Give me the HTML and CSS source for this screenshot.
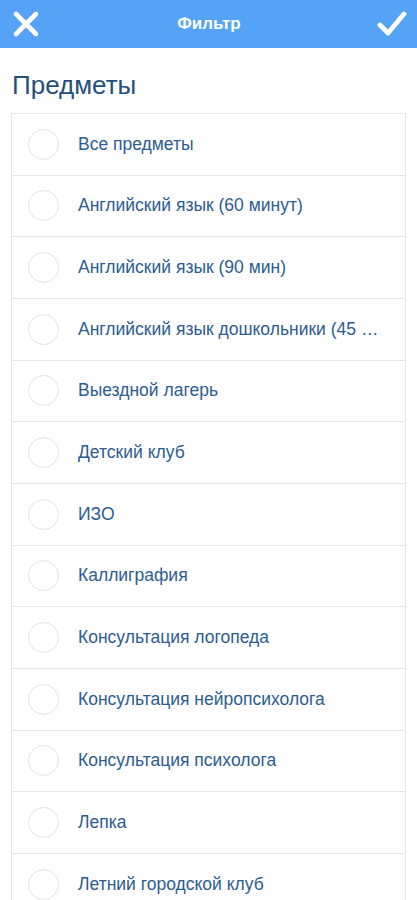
FILE: index.html
```html
<!DOCTYPE html>
<html lang="ru">
<head>
<meta charset="utf-8">
<title>Фильтр</title>
<link rel="stylesheet" href="styles.css">
</head>
<body>
<header class="topbar">
  <button class="icon-btn" aria-label="Закрыть">
    <svg width="28" height="28" viewBox="0 0 28 28"><path d="M4 4 L24 24 M24 4 L4 24" stroke="#fff" stroke-width="4.6" stroke-linecap="round"/></svg>
  </button>
  <div class="topbar-title">Фильтр</div>
  <button class="icon-btn" aria-label="Готово">
    <svg width="30" height="28" viewBox="0 0 30 28"><path d="M3 15 L11 23 L27 4" fill="none" stroke="#fff" stroke-width="4.8" stroke-linecap="round" stroke-linejoin="round"/></svg>
  </button>
</header>
<main class="content">
  <h1 class="section-title">Предметы</h1>
  <ul class="list">
    <li class="row"><span class="radio"></span><span class="label">Все предметы</span></li>
    <li class="row"><span class="radio"></span><span class="label">Английский язык (60 минут)</span></li>
    <li class="row"><span class="radio"></span><span class="label">Английский язык (90 мин)</span></li>
    <li class="row"><span class="radio"></span><span class="label">Английский язык дошкольники (45 …</span></li>
    <li class="row"><span class="radio"></span><span class="label">Выездной лагерь</span></li>
    <li class="row"><span class="radio"></span><span class="label">Детский клуб</span></li>
    <li class="row"><span class="radio"></span><span class="label">ИЗО</span></li>
    <li class="row"><span class="radio"></span><span class="label">Каллиграфия</span></li>
    <li class="row"><span class="radio"></span><span class="label">Консультация логопеда</span></li>
    <li class="row"><span class="radio"></span><span class="label">Консультация нейропсихолога</span></li>
    <li class="row"><span class="radio"></span><span class="label">Консультация психолога</span></li>
    <li class="row"><span class="radio"></span><span class="label">Лепка</span></li>
    <li class="row"><span class="radio"></span><span class="label">Летний городской клуб</span></li>
  </ul>
</main>
</body>
</html>
```

FILE: styles.css
```css
* { box-sizing: border-box; }
html, body { margin: 0; padding: 0; }
body {
  width: 417px;
  height: 900px;
  overflow: hidden;
  background: #fff;
  font-family: "Liberation Sans", Arial, sans-serif;
}
.topbar {
  height: 48px;
  background: #54a3f6;
  display: flex;
  align-items: center;
  justify-content: space-between;
  padding: 0 10px 0 11px;
}
.icon-btn {
  border: 0;
  background: none;
  padding: 0;
  width: 30px;
  height: 30px;
  display: flex;
  align-items: center;
  justify-content: center;
}
.topbar-title {
  color: #fff;
  font-size: 17px;
  font-weight: 700;
}
.content {
  padding: 0 11px 0 11px;
}
.section-title {
  margin: 0;
  padding: 22px 0 0 1px;
  height: 65px;
  font-size: 26px;
  font-weight: 400;
  color: #24507f;
  line-height: 30px;
}
.list {
  list-style: none;
  margin: 0;
  padding: 0;
  border: 1px solid #e6e6e6;
  border-bottom: 0;
  width: 395px;
}
.row {
  height: 61.67px;
  border-bottom: 1px solid #e6e6e6;
  display: flex;
  align-items: center;
  padding-left: 16px;
}
.radio {
  width: 31px;
  height: 31px;
  border-radius: 50%;
  border: 1px solid #e3e3e3;
  flex: none;
}
.label {
  margin-left: 19px;
  font-size: 17.5px;
  color: #2b5d93;
  white-space: nowrap;
}
```
